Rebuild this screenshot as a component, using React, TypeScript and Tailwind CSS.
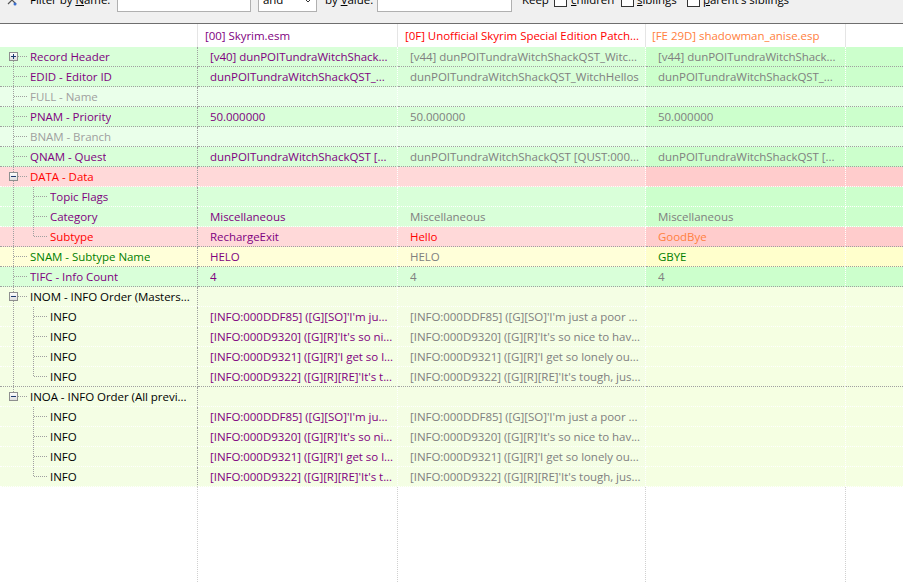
import React from "react";

type Bg = "green" | "light" | "pink" | "yellow" | "pale";
type Cell = { t: string; c: string } | null;
type Row = {
  label: string;
  lc: string;
  level: 0 | 1;
  box?: "plus" | "minus";
  root: "full" | "bottom" | "top" | "none";
  child?: "full" | "top";
  bg: Bg;
  cells: [Cell, Cell, Cell];
  sep: "gray" | "white";
};

const PURPLE = "text-[#800080]";
const GRAY = "text-[#808080]";

const bgA: Record<Bg, string> = {
  green: "bg-[#d9ffd9]",
  light: "bg-[#eaffea]",
  pink: "bg-[#ffd9d9]",
  yellow: "bg-[#ffffd9]",
  pale: "bg-[#f4fee4]",
};
const bgB: Record<Bg, string> = {
  green: "bg-[#ccffcc]",
  light: "bg-[#e3ffe3]",
  pink: "bg-[#ffcccc]",
  yellow: "bg-[#ffffcc]",
  pale: "bg-[#f5ffe2]",
};

const p = (t: string): Cell => ({ t, c: PURPLE });
const g = (t: string): Cell => ({ t, c: GRAY });

const infos: [string, string][] = [
  ["[INFO:000DDF85] ([G][SO]'I'm ju...", "[INFO:000DDF85] ([G][SO]'I'm just a poor ..."],
  ["[INFO:000D9320] ([G][R]'It's so ni...", "[INFO:000D9320] ([G][R]'It's so nice to hav..."],
  ["[INFO:000D9321] ([G][R]'I get so l...", "[INFO:000D9321] ([G][R]'I get so lonely ou..."],
  ["[INFO:000D9322] ([G][R][RE]'It's t...", "[INFO:000D9322] ([G][R][RE]'It's tough, jus..."],
];

const rows: Row[] = [
  { label: "Record Header", lc: PURPLE, level: 0, box: "plus", root: "bottom", bg: "green", sep: "gray",
    cells: [p("[v40] dunPOITundraWitchShack..."), g("[v44] dunPOITundraWitchShackQST_Witc..."), g("[v44] dunPOITundraWitchShack...")] },
  { label: "EDID - Editor ID", lc: PURPLE, level: 0, root: "full", bg: "green", sep: "gray",
    cells: [p("dunPOITundraWitchShackQST_..."), g("dunPOITundraWitchShackQST_WitchHellos"), g("dunPOITundraWitchShackQST_...")] },
  { label: "FULL - Name", lc: "text-[#a0a0a0]", level: 0, root: "full", bg: "light", sep: "gray", cells: [null, null, null] },
  { label: "PNAM - Priority", lc: PURPLE, level: 0, root: "full", bg: "green", sep: "gray",
    cells: [p("50.000000"), g("50.000000"), g("50.000000")] },
  { label: "BNAM - Branch", lc: "text-[#a0a0a0]", level: 0, root: "full", bg: "light", sep: "gray", cells: [null, null, null] },
  { label: "QNAM - Quest", lc: PURPLE, level: 0, root: "full", bg: "green", sep: "gray",
    cells: [p("dunPOITundraWitchShackQST [..."), g("dunPOITundraWitchShackQST [QUST:000..."), g("dunPOITundraWitchShackQST [...")] },
  { label: "DATA - Data", lc: "text-[#ff0000]", level: 0, box: "minus", root: "full", bg: "pink", sep: "white", cells: [null, null, null] },
  { label: "Topic Flags", lc: PURPLE, level: 1, root: "full", child: "full", bg: "green", sep: "white", cells: [null, null, null] },
  { label: "Category", lc: PURPLE, level: 1, root: "full", child: "full", bg: "green", sep: "white",
    cells: [p("Miscellaneous"), g("Miscellaneous"), g("Miscellaneous")] },
  { label: "Subtype", lc: "text-[#ff0000]", level: 1, root: "full", child: "top", bg: "pink", sep: "gray",
    cells: [p("RechargeExit"), { t: "Hello", c: "text-[#ff0000]" }, { t: "GoodBye", c: "text-[#ff8040]" }] },
  { label: "SNAM - Subtype Name", lc: "text-[#008000]", level: 0, root: "full", bg: "yellow", sep: "gray",
    cells: [p("HELO"), g("HELO"), { t: "GBYE", c: "text-[#008000]" }] },
  { label: "TIFC - Info Count", lc: PURPLE, level: 0, root: "full", bg: "green", sep: "gray",
    cells: [p("4"), g("4"), g("4")] },
  { label: "INOM - INFO Order (Masters...", lc: "text-black", level: 0, box: "minus", root: "full", bg: "pale", sep: "white", cells: [null, null, null] },
  ...infos.map(
    ([a, b], i): Row => ({
      label: "INFO", lc: "text-black", level: 1, root: "full", child: i === 3 ? "top" : "full", bg: "pale",
      sep: i === 3 ? "gray" : "white", cells: [p(a), g(b), null],
    })
  ),
  { label: "INOA - INFO Order (All previ...", lc: "text-black", level: 0, box: "minus", root: "top", bg: "pale", sep: "white", cells: [null, null, null] },
  ...infos.map(
    ([a, b], i): Row => ({
      label: "INFO", lc: "text-black", level: 1, root: "none", child: i === 3 ? "top" : "full", bg: "pale",
      sep: "white", cells: [p(a), g(b), null],
    })
  ),
];

const DOT = "#a0a0a0";

function Tree({ r }: { r: Row }) {
  const w = r.level === 0 ? 30 : 50;
  return (
    <svg width={w} height={19} className="shrink-0 block" shapeRendering="crispEdges">
      {r.root !== "none" && (
        <line
          x1={13.5}
          x2={13.5}
          y1={r.root === "bottom" ? 10 : 0}
          y2={r.root === "top" ? 10 : 19}
          stroke={DOT}
          strokeDasharray="1 1"
        />
      )}
      {r.level === 0 && (
        <line x1={r.box ? 18 : 14} x2={27} y1={9.5} y2={9.5} stroke={DOT} strokeDasharray="1 1" />
      )}
      {r.level === 1 && (
        <>
          <line x1={33.5} x2={33.5} y1={0} y2={r.child === "top" ? 10 : 19} stroke={DOT} strokeDasharray="1 1" />
          <line x1={34} x2={47} y1={9.5} y2={9.5} stroke={DOT} strokeDasharray="1 1" />
        </>
      )}
      {r.box && (
        <g>
          <defs>
            <linearGradient id="bx" x1="0" y1="0" x2="0" y2="1">
              <stop offset="0" stopColor="#ffffff" />
              <stop offset="1" stopColor="#dcdcdc" />
            </linearGradient>
          </defs>
          <rect x={9.5} y={5.5} width={8} height={8} fill="url(#bx)" stroke="#8e8f8f" />
          <line x1={11} x2={16} y1={9.5} y2={9.5} stroke="#1c3a70" />
          {r.box === "plus" && <line x1={13.5} x2={13.5} y1={7} y2={12} stroke="#1c3a70" />}
        </g>
      )}
    </svg>
  );
}

function DataRow({ r }: { r: Row }) {
  const sepCls = r.sep === "gray" ? "border-b-[#a0a0a0]" : "border-b-white";
  const base = `h-[20px] border-b border-dotted ${sepCls} overflow-hidden whitespace-nowrap leading-[19px]`;
  return (
    <>
      <div className={`${base} ${bgA[r.bg]} border-r border-r-[#a0a0a0] border-r-dotted flex items-center`}>
        <Tree r={r} />
        <span className={`${r.lc} truncate`}>{r.label}</span>
      </div>
      {r.cells.map((c, i) => (
        <div
          key={i}
          className={`${base} ${i === 2 ? bgB[r.bg] : bgA[r.bg]} border-r border-dotted border-r-white pl-[12px] pr-[2px]`}
        >
          {c && <span className={`${c.c} block overflow-hidden`}>{c.t}</span>}
        </div>
      ))}
      <div className={`${base} ${bgB[r.bg]}`} />
    </>
  );
}

function Check() {
  return <span className="w-[13px] h-[13px] border border-[#333] bg-white shrink-0 block" />;
}

export default function App() {
  return (
    <div className="w-[903px] h-[582px] overflow-hidden bg-white flex flex-col font-['Segoe_UI','Open_Sans',sans-serif] text-[11.5px] tracking-[-0.04px] text-black">
      {/* toolbar */}
      <div className="h-[24px] shrink-0 bg-[#f0f0f0] border-b border-[#6e6e6e] overflow-hidden">
        <div className="flex items-center h-[24px] -mt-[12px]">
          <svg width="14" height="14" className="ml-[5px] shrink-0" viewBox="0 0 14 14">
            <path d="M3 3 L11 11 M11 3 L3 11" stroke="#555" strokeWidth="1.2" />
            <circle cx="10" cy="11" r="1.5" fill="#3a6fd0" />
          </svg>
          <span className="ml-[11px] w-[87px] shrink-0">
            Filter by <span className="underline">N</span>ame:
          </span>
          <div className="w-[134px] h-[23px] bg-white border border-[#b0b0b0] shrink-0" />
          <div className="ml-[7px] w-[59px] h-[23px] bg-white border border-[#b0b0b0] shrink-0 flex items-center justify-between pl-[4px] pr-[4px]">
            <span>and</span>
            <svg width="8" height="5" viewBox="0 0 8 5">
              <path d="M0.5 0.5 L4 4 L7.5 0.5" fill="none" stroke="#333" />
            </svg>
          </div>
          <span className="ml-[8px] w-[52px] shrink-0">
            by <span className="underline">V</span>alue:
          </span>
          <div className="w-[135px] h-[23px] bg-white border border-[#b0b0b0] shrink-0" />
          <span className="ml-[10px] w-[32px] shrink-0">Keep</span>
          <Check />
          <span className="ml-[4px] w-[50px] shrink-0">
            <span className="underline">c</span>hildren
          </span>
          <Check />
          <span className="ml-[3px] w-[50px] shrink-0">
            <span className="underline">s</span>iblings
          </span>
          <Check />
          <span className="ml-[3px] shrink-0">
            <span className="underline">p</span>arent's siblings
          </span>
        </div>
      </div>

      {/* header */}
      <div className="grid grid-cols-[198px_200px_248px_200px_1fr] h-[23px] shrink-0 bg-white leading-[23px] whitespace-nowrap">
        <div className="border-r border-[#e5e5e5]" />
        <div className="border-r border-[#e5e5e5] pl-[7px] text-[#800080] overflow-hidden">[00] Skyrim.esm</div>
        <div className="border-r border-[#e5e5e5] pl-[7px] text-[#ff0000] overflow-hidden">
          [0F] Unofficial Skyrim Special Edition Patch...
        </div>
        <div className="border-r border-[#e5e5e5] pl-[6px] text-[#ff8040] overflow-hidden">[FE 29D] shadowman_anise.esp</div>
        <div />
      </div>

      {/* rows */}
      <div className="grid grid-cols-[198px_200px_248px_200px_1fr] shrink-0">
        {rows.map((r, i) => (
          <DataRow key={i} r={r} />
        ))}
      </div>

      {/* empty area */}
      <div className="grid grid-cols-[198px_200px_248px_200px_1fr] flex-1">
        <div className="border-r border-dotted border-[#d0d0d0]" />
        <div className="border-r border-dotted border-[#d0d0d0]" />
        <div className="border-r border-dotted border-[#d0d0d0]" />
        <div className="border-r border-dotted border-[#d0d0d0]" />
        <div />
      </div>
    </div>
  );
}
